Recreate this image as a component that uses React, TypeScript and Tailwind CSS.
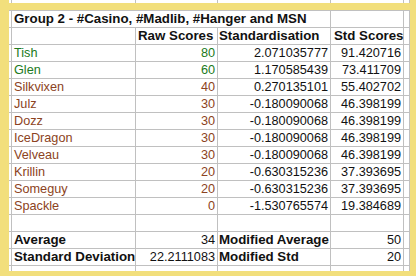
import React from "react";

type Tone = "g" | "b" | "k";

const toneClass: Record<Tone, string> = {
  g: "text-[#217a21]",
  b: "text-[#8c4322]",
  k: "text-[#111111]",
};

const people: [string, string, string, string, Tone][] = [
  ["Tish", "80", "2.071035777", "91.420716", "g"],
  ["Glen", "60", "1.170585439", "73.411709", "g"],
  ["Silkvixen", "40", "0.270135101", "55.402702", "b"],
  ["Julz", "30", "-0.180090068", "46.398199", "b"],
  ["Dozz", "30", "-0.180090068", "46.398199", "b"],
  ["IceDragon", "30", "-0.180090068", "46.398199", "b"],
  ["Velveau", "30", "-0.180090068", "46.398199", "b"],
  ["Krillin", "20", "-0.630315236", "37.393695", "b"],
  ["Someguy", "20", "-0.630315236", "37.393695", "b"],
  ["Spackle", "0", "-1.530765574", "19.384689", "b"],
];

function Pre() {
  return <div className="w-[3px] shrink-0 border-r border-[#c0c0c0]" />;
}

function Tail() {
  return <div className="w-[6px] shrink-0 border-r border-[#c0c0c0]" />;
}

function Cell({
  w,
  children,
  right,
  bold,
  tone = "k",
}: {
  w: string;
  children?: React.ReactNode;
  right?: boolean;
  bold?: boolean;
  tone?: Tone;
}) {
  return (
    <div
      className={`${w} shrink-0 border-r border-[#c0c0c0] flex items-center whitespace-nowrap overflow-visible ${
        right ? "justify-end pr-[2px]" : "justify-start pl-[1px]"
      } ${bold ? "font-bold text-[13.3px]" : "text-[12.7px]"} ${toneClass[tone]}`}
    >
      {children}
    </div>
  );
}

function Row({ children, top }: { children: React.ReactNode; top?: boolean }) {
  return (
    <div
      className={`flex ${top ? "h-[18px] border-t" : "h-[17px]"} border-b border-[#c0c0c0] leading-none`}
    >
      <Pre />
      {children}
      <Tail />
    </div>
  );
}

export default function App() {
  return (
    <div
      className="w-[416px] h-[276px] flex bg-[#f2df7c] overflow-hidden"
      style={{ fontFamily: '"Liberation Sans", Arial, sans-serif' }}
    >
      <div className="w-[9px] shrink-0" />
      <div className="w-[401px] shrink-0 flex flex-col">
        <div className="h-[3px] flex bg-white">
          <Pre />
          <div className="w-[124px] shrink-0 border-r border-[#c0c0c0]" />
          <div className="w-[82px] shrink-0 border-r border-[#c0c0c0]" />
          <div className="w-[113px] shrink-0 border-r border-[#c0c0c0]" />
          <div className="w-[73px] shrink-0 border-r border-[#c0c0c0]" />
          <Tail />
        </div>
        <div className="h-[7px]" />
        <div className="bg-white">
          <Row top>
            <Cell w="w-[319px]" bold>
              <span className="pl-[1px]">Group 2 - #Casino, #Madlib, #Hanger and MSN</span>
            </Cell>
            <Cell w="w-[73px]" />
          </Row>
          <Row>
            <Cell w="w-[124px]" />
            <Cell w="w-[82px]" bold>
              <span className="pl-[1px]">Raw Scores</span>
            </Cell>
            <Cell w="w-[113px]" bold>
              Standardisation
            </Cell>
            <Cell w="w-[73px]" bold>
              <span className="pl-[2px]">Std Scores</span>
            </Cell>
          </Row>
          {people.map(([name, raw, st, sc, tone], i) => (
            <Row key={i}>
              <Cell w="w-[124px]" tone={tone}>
                <span className="pl-[1px]">{name}</span>
              </Cell>
              <Cell w="w-[82px]" right tone={tone}>
                {raw}
              </Cell>
              <Cell w="w-[113px]" right>
                {st}
              </Cell>
              <Cell w="w-[73px]" right>
                {sc}
              </Cell>
            </Row>
          ))}
          <Row>
            <Cell w="w-[124px]" />
            <Cell w="w-[82px]" />
            <Cell w="w-[113px]" />
            <Cell w="w-[73px]" />
          </Row>
          <Row>
            <Cell w="w-[124px]" bold>
              <span className="pl-[1px]">Average</span>
            </Cell>
            <Cell w="w-[82px]" right>
              34
            </Cell>
            <Cell w="w-[113px]" bold>
              Modified Average
            </Cell>
            <Cell w="w-[73px]" right>
              50
            </Cell>
          </Row>
          <Row>
            <Cell w="w-[124px]" bold>
              <span className="pl-[1px]">Standard Deviation</span>
            </Cell>
            <Cell w="w-[82px]" right>
              22.2111083
            </Cell>
            <Cell w="w-[113px]" bold>
              Modified Std
            </Cell>
            <Cell w="w-[73px]" right>
              20
            </Cell>
          </Row>
          <div className="h-[5px] flex">
            <Pre />
            <div className="w-[124px] shrink-0 border-r border-[#c0c0c0]" />
            <div className="w-[82px] shrink-0 border-r border-[#c0c0c0]" />
            <div className="w-[113px] shrink-0 border-r border-[#c0c0c0]" />
            <div className="w-[73px] shrink-0 border-r border-[#c0c0c0]" />
            <Tail />
          </div>
        </div>
      </div>
      <div className="flex-1" />
    </div>
  );
}
